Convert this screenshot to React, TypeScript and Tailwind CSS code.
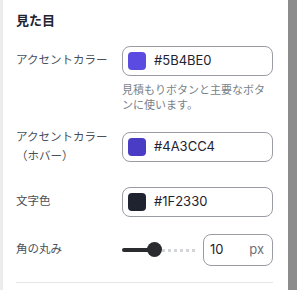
import React from "react";

const font = { fontFamily: '"Inter", "Noto Sans CJK JP", sans-serif' };

function ColorField({ color }: { color: string }) {
  return (
    <div className="flex items-center gap-2 h-[30px] rounded-lg border border-[#9a9ca3] px-[5px]">
      <span className="w-[18px] h-[18px] rounded-[4px]" style={{ backgroundColor: color }} />
      <span className="text-[13px] text-[#1f2330]">{color}</span>
    </div>
  );
}

export default function App() {
  return (
    <div className="flex w-[300px] h-[290px] bg-white overflow-hidden" style={font}>
      <div className="w-[3px] bg-[#ececec]" />
      <div className="flex-1 flex flex-col pl-[13px] pr-[15px] pt-[10px]">
        <h2 className="text-[13px] font-bold text-[#1f2330] leading-[20px]">見た目</h2>

        <div className="grid grid-cols-[98px_1fr] gap-x-2 mt-[16px] items-center">
          <span className="text-[11.5px] whitespace-nowrap text-[#4b4f58]">アクセントカラー</span>
          <ColorField color="#5B4BE0" />
        </div>
        <p className="ml-[106px] mt-[7px] text-[11px] leading-[15px] text-[#7a7f88]">
          見積もりボタンと主要なボタンに使います。
        </p>

        <div className="grid grid-cols-[98px_1fr] gap-x-2 mt-[15px] items-center">
          <span className="text-[11.5px] whitespace-nowrap leading-[19px] text-[#4b4f58]">
            アクセントカラー<br />（ホバー）
          </span>
          <ColorField color="#4A3CC4" />
        </div>

        <div className="grid grid-cols-[98px_1fr] gap-x-2 mt-[21px] items-center">
          <span className="text-[11.5px] whitespace-nowrap text-[#4b4f58]">文字色</span>
          <ColorField color="#1F2330" />
        </div>

        <div className="grid grid-cols-[98px_1fr] gap-x-2 mt-[17px] items-center">
          <span className="text-[11.5px] whitespace-nowrap text-[#4b4f58]">角の丸み</span>
          <div className="flex items-center gap-2">
            <div className="relative w-[73px] h-[16px] flex items-center">
              <div className="h-[4px] w-[28px] rounded-full bg-[#2a2b2f]" />
              <div className="h-[3px] flex-1 ml-[12px] border-t-[3px] border-dotted border-[#d4d5d8]" />
              <span className="absolute left-[25px] top-0 w-[15px] h-[15px] rounded-full bg-[#2a2b2f]" />
            </div>
            <div className="flex items-center justify-between w-[70px] h-[32px] rounded-lg border border-[#9a9ca3] pl-[6px] pr-[8px]">
              <span className="text-[13px] text-[#1f2330]">10</span>
              <span className="text-[13px] text-[#6b7079]">px</span>
            </div>
          </div>
        </div>

        <div className="mt-[16px] border-t border-[#e3e4e6]" />
      </div>
      <div className="w-[9px] bg-[#8c8c8c]" />
      <div className="w-[3px] bg-white" />
    </div>
  );
}
